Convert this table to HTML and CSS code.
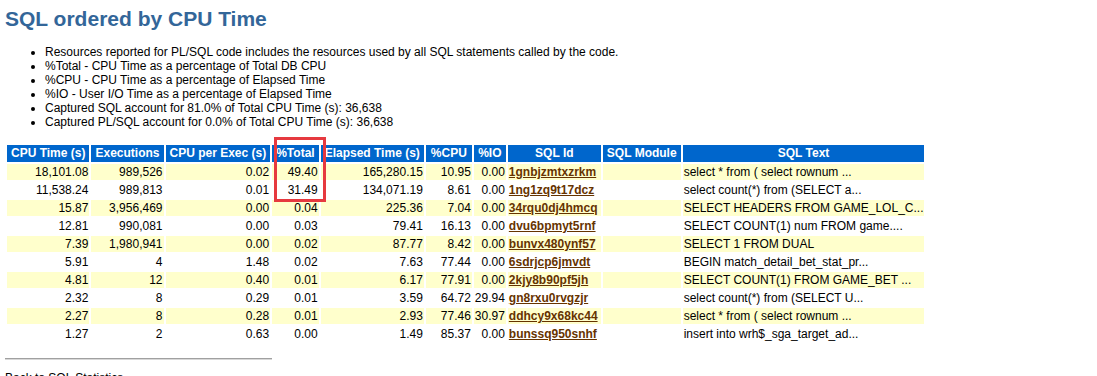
FILE: index.html
```html
<!DOCTYPE html>
<html lang="en">

<head>
    <meta charset="UTF-8">
    <title>SQL ordered by CPU Time</title>
    <link rel="stylesheet" href="styles.css">
</head>

<body>

    <h2 class="awr">SQL ordered by CPU Time</h2>
    <ul>
        <li class="awr">Resources reported for PL/SQL code includes the resources used by all SQL statements called by the code.</li>
        <li class="awr">%Total - CPU Time as a percentage of Total DB CPU</li>
        <li class="awr">%CPU - CPU Time as a percentage of Elapsed Time</li>
        <li class="awr">%IO - User I/O Time as a percentage of Elapsed Time</li>
        <li class="awr">Captured SQL account for 81.0% of Total CPU Time (s): 36,638</li>
        <li class="awr">Captured PL/SQL account for 0.0% of Total CPU Time (s): 36,638</li>
    </ul>

    <div class="tablewrap">
        <table class="tdiff">
            <tr>
                <th class="awrbg">CPU Time (s)</th>
                <th class="awrbg">Executions</th>
                <th class="awrbg">CPU per Exec (s)</th>
                <th class="awrbg">%Total</th>
                <th class="awrbg">Elapsed Time (s)</th>
                <th class="awrbg col-cpu">%CPU</th>
                <th class="awrbg col-io">%IO</th>
                <th class="awrbg col-id">SQL Id</th>
                <th class="awrbg">SQL Module</th>
                <th class="awrbg">SQL Text</th>
            </tr>
            <tr class="awrc">
                <td class="num">18,101.08</td><td class="num">989,526</td><td class="num">0.02</td><td class="num">49.40</td><td class="num">165,280.15</td><td class="num">10.95</td><td class="num">0.00</td>
                <td><a class="awr" href="#">1gnbjzmtxzrkm</a></td><td></td><td>select * from ( select rownum ...</td>
            </tr>
            <tr class="awrnc">
                <td class="num">11,538.24</td><td class="num">989,813</td><td class="num">0.01</td><td class="num">31.49</td><td class="num">134,071.19</td><td class="num">8.61</td><td class="num">0.00</td>
                <td><a class="awr" href="#">1ng1zq9t17dcz</a></td><td></td><td>select count(*) from (SELECT a...</td>
            </tr>
            <tr class="awrc">
                <td class="num">15.87</td><td class="num">3,956,469</td><td class="num">0.00</td><td class="num">0.04</td><td class="num">225.36</td><td class="num">7.04</td><td class="num">0.00</td>
                <td><a class="awr" href="#">34rqu0dj4hmcq</a></td><td></td><td>SELECT HEADERS FROM GAME_LOL_C...</td>
            </tr>
            <tr class="awrnc">
                <td class="num">12.81</td><td class="num">990,081</td><td class="num">0.00</td><td class="num">0.03</td><td class="num">79.41</td><td class="num">16.13</td><td class="num">0.00</td>
                <td><a class="awr" href="#">dvu6bpmyt5rnf</a></td><td></td><td>SELECT COUNT(1) num FROM game....</td>
            </tr>
            <tr class="awrc">
                <td class="num">7.39</td><td class="num">1,980,941</td><td class="num">0.00</td><td class="num">0.02</td><td class="num">87.77</td><td class="num">8.42</td><td class="num">0.00</td>
                <td><a class="awr" href="#">bunvx480ynf57</a></td><td></td><td>SELECT 1 FROM DUAL</td>
            </tr>
            <tr class="awrnc">
                <td class="num">5.91</td><td class="num">4</td><td class="num">1.48</td><td class="num">0.02</td><td class="num">7.63</td><td class="num">77.44</td><td class="num">0.00</td>
                <td><a class="awr" href="#">6sdrjcp6jmvdt</a></td><td></td><td>BEGIN match_detail_bet_stat_pr...</td>
            </tr>
            <tr class="awrc">
                <td class="num">4.81</td><td class="num">12</td><td class="num">0.40</td><td class="num">0.01</td><td class="num">6.17</td><td class="num">77.91</td><td class="num">0.00</td>
                <td><a class="awr" href="#">2kjy8b90pf5jh</a></td><td></td><td>SELECT COUNT(1) FROM GAME_BET ...</td>
            </tr>
            <tr class="awrnc">
                <td class="num">2.32</td><td class="num">8</td><td class="num">0.29</td><td class="num">0.01</td><td class="num">3.59</td><td class="num">64.72</td><td class="num">29.94</td>
                <td><a class="awr" href="#">gn8rxu0rvgzjr</a></td><td></td><td>select count(*) from (SELECT U...</td>
            </tr>
            <tr class="awrc">
                <td class="num">2.27</td><td class="num">8</td><td class="num">0.28</td><td class="num">0.01</td><td class="num">2.93</td><td class="num">77.46</td><td class="num">30.97</td>
                <td><a class="awr" href="#">ddhcy9x68kc44</a></td><td></td><td>select * from ( select rownum ...</td>
            </tr>
            <tr class="awrnc">
                <td class="num">1.27</td><td class="num">2</td><td class="num">0.63</td><td class="num">0.00</td><td class="num">1.49</td><td class="num">85.37</td><td class="num">0.00</td>
                <td><a class="awr" href="#">bunssq950snhf</a></td><td></td><td>insert into wrh$_sga_target_ad...</td>
            </tr>
        </table>
        <!-- highlight box drawn over the %Total column -->
        <div class="mark"></div>
    </div>

    <hr class="rule">
    <div class="back">Back to SQL Statistics</div>

</body>

</html>
```

FILE: styles.css
```css
body {
    margin: 0 5px;
    font-family: "Liberation Sans", Arial, sans-serif;
    color: black;
    background: white;
}

h2.awr {
    font-size: 21px;
    font-weight: bold;
    line-height: 24px;
    color: #336699;
    margin: 7px 0 0 0;
}

ul {
    margin: 14px 0 14px 0;
    padding-left: 40px;
}

li.awr {
    font-size: 12px;
    line-height: 14px;
}

.tablewrap {
    position: relative;
    width: fit-content;
}

table.tdiff {
    border-collapse: separate;
    border-spacing: 2px;
    font-size: 12px;
}

th.awrbg {
    font-weight: bold;
    color: white;
    background: #0066cc;
    line-height: 14px;
    padding: 1px 4px 2px 4px;
    white-space: nowrap;
}

th.col-cpu {
    width: 38px;
}

th.col-io {
    width: 24px;
}

th.col-id {
    width: 85px;
}

td {
    line-height: 14px;
    padding: 1px;
    vertical-align: top;
    white-space: nowrap;
    color: black;
}

td.num {
    text-align: right;
}

tr.awrc td {
    background: #ffffcc;
}

tr.awrnc td {
    background: white;
}

a.awr {
    font-weight: bold;
    color: #663300;
}

.mark {
    position: absolute;
    left: 269px;
    top: -6px;
    width: 46px;
    height: 59px;
    border: 3px solid #e6393f;
}

hr.rule {
    width: 267px;
    margin: 14px 0 11px 0;
    border: none;
    border-top: 1px solid #a0a0a0;
    border-bottom: 1px solid #d8d8d8;
    height: 0;
}

.back {
    font-size: 12px;
    line-height: 14px;
}
```
